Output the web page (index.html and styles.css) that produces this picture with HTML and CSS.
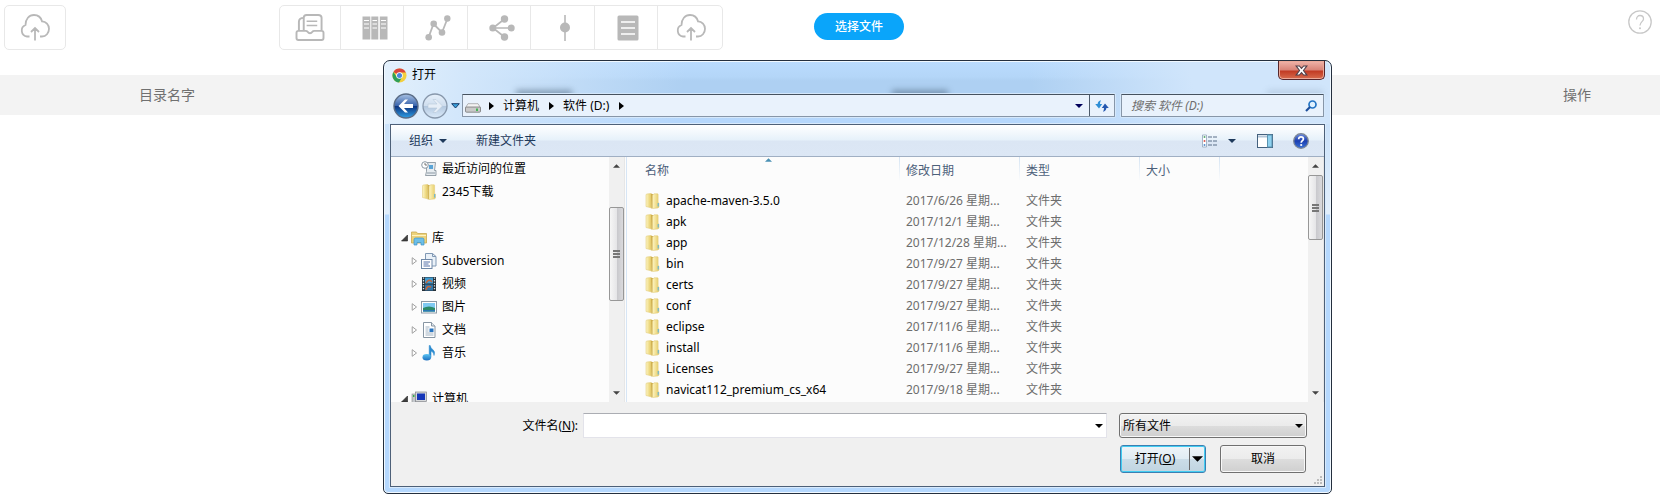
FILE: index.html
```html
<!DOCTYPE html>
<html lang="zh-CN">
<head>
<meta charset="utf-8">
<title>目录</title>
<link rel="stylesheet" href="styles.css">
</head>
<body>
<svg class="defs" aria-hidden="true">
  <defs>
    <linearGradient id="gFold" x1="0" x2="1" y1="0" y2="0"><stop offset="0" stop-color="#fdf5c4"/><stop offset="1" stop-color="#e6cb62"/></linearGradient>
    <linearGradient id="gBack" x1="0" x2="0" y1="0" y2="1"><stop offset="0" stop-color="#a9c2e4"/><stop offset=".48" stop-color="#3a65ac"/><stop offset=".52" stop-color="#0c3480"/><stop offset="1" stop-color="#2fa0e6"/></linearGradient>
    <linearGradient id="gFwd" x1="0" x2="0" y1="0" y2="1"><stop offset="0" stop-color="#e6f0fb"/><stop offset=".48" stop-color="#cfdeee"/><stop offset=".52" stop-color="#b3c8df"/><stop offset="1" stop-color="#dcebfa"/></linearGradient>
    <linearGradient id="gBlue" x1="0" x2="0" y1="0" y2="1"><stop offset="0" stop-color="#5cc3f2"/><stop offset="1" stop-color="#1a6fc0"/></linearGradient>
    <linearGradient id="gHelp" x1="0" x2="0" y1="0" y2="1"><stop offset="0" stop-color="#6e8fe0"/><stop offset=".5" stop-color="#1c3fb0"/><stop offset="1" stop-color="#3a72d8"/></linearGradient>
    <symbol id="cloud" viewBox="0 0 30 27"><path d="M9.500 22.500H7a6 6 0 0 1-1.500-11.500C5.500 5 9 1 14 1c4 0 7 2.500 8 6.300 4 .2 7 3.400 7 7.500 0 4.200-3 7.700-7 7.700h-2M15 26.500V14.500M11 18l4-4 4 4" fill="none" stroke="currentColor" stroke-width="1.800"/></symbol>
    <symbol id="folder" viewBox="0 0 14 16"><path d="M.5 2Q.5 1 1.500 1L5.500.5V14.800L.5 13.500Z" fill="url(#gFold)" stroke="#e3cd7c" stroke-width=".6"/><path d="M5.500.5 8 1.500V14.500L5.800 15.700Z" fill="#cfae4a"/><path d="M7 2.500 8.500.8H12q.6 0 .6.600v8l.9.700v4l-1 .8L7 15.500Z" fill="url(#gFold)" stroke="#e3cd7c" stroke-width=".6"/><path d="M12.700 10v3.500" stroke="#55b1ea" stroke-width="1"/></symbol>
    <symbol id="closed" viewBox="0 0 6 8"><path d="M.7.7 5 4 .7 7.300Z" fill="#fff" stroke="#a0a0a0"/></symbol>
    <symbol id="opened" viewBox="0 0 7 7"><path d="M6.500.5v6h-6Z" fill="#404040" stroke="#222" stroke-width=".6"/></symbol>
    <symbol id="down" viewBox="0 0 8 4"><path d="M0 0h8L4 4Z" fill="currentColor"/></symbol>
    <symbol id="right" viewBox="0 0 5 8"><path d="M0 0 5 4 0 8Z" fill="currentColor"/></symbol>
    <symbol id="up" viewBox="0 0 8 4"><path d="M0 4h8L4 0Z" fill="currentColor"/></symbol>
  </defs>
</svg>

<header class="topbar">
  <button class="tool upload" type="button" aria-label="上传"><svg class="i30"><use href="#cloud"/></svg></button>
  <div class="tools">
    <button class="tool first" type="button" aria-label="收件箱"><svg class="i30" viewBox="0 0 30 28"><g fill="none" stroke="currentColor" stroke-width="2" stroke-linejoin="round"><path d="M8.500 17V4q0-3 3-3h12Q27 1 27 4v13"/><path d="M8.500 4Q3.500 4 3.500 8v9" /><path d="M11.500 7.500h11M11.500 12h11" stroke-width="1.600"/><path d="M3 17.500h7.500q1.500 0 2 1 1 1.500 2.500 1.500t2.500-1.500q.5-1 2-1H27q2 0 2 2V25q0 2-2 2H3q-2 0-2-2v-5.500q0-2 2-2Z"/></g></svg></button>
    <button class="tool" type="button" aria-label="档案"><svg class="i26" viewBox="0 0 26 24"><path d="M.5.5h7.800v23H.5ZM9.300.5h7v23h-7ZM17.800.5h7.700v23h-7.700Z" fill="currentColor"/><path d="M2 4.500h5M2 8h5M2 12h5M10.500 4.500h4.500M10.500 8h4.500M10.500 12h4.500M19 4.500h5M19 8h5M19 12h5" stroke="#fff" stroke-width="1.200"/></svg></button>
    <button class="tool" type="button" aria-label="折线"><svg class="i26" viewBox="0 0 26 26"><path d="m3.500 22.500 5-13.500 8.500 8.500L22.500 3.500" fill="none" stroke="currentColor" stroke-width="1.800"/><g fill="currentColor"><circle cx="3.700" cy="22.300" r="3.300"/><circle cx="8.700" cy="8.700" r="3.300"/><circle cx="17" cy="17.500" r="3.300"/><circle cx="22.300" cy="3.500" r="3.200"/></g></svg></button>
    <button class="tool" type="button" aria-label="分享"><svg class="i26" viewBox="0 0 26 26"><path d="M15.500 4 4 13l11.500 9M4 13h18" fill="none" stroke="currentColor" stroke-width="1.700"/><g fill="currentColor"><circle cx="3.800" cy="13" r="3.500"/><circle cx="15.500" cy="4" r="3.700"/><circle cx="22.200" cy="13" r="3.500"/><circle cx="15.500" cy="22" r="3.700"/></g></svg></button>
    <button class="tool" type="button" aria-label="节点"><svg class="i26" viewBox="0 0 26 26"><path d="M13 0v26" stroke="currentColor" stroke-width="1.600"/><circle cx="13" cy="12.500" r="5" fill="currentColor"/></svg></button>
    <button class="tool" type="button" aria-label="列表"><svg class="i26" viewBox="0 0 26 26"><rect x="2.500" y=".5" width="21" height="25" rx="1.500" fill="currentColor"/><path d="M6 7h14M6 13h14M6 19h14" stroke="#fff" stroke-width="1.600"/></svg></button>
    <button class="tool last" type="button" aria-label="云上传"><svg class="i30"><use href="#cloud"/></svg></button>
  </div>
  <button class="choose" type="button">选择文件</button>
  <button class="help" type="button" aria-label="帮助"><svg viewBox="0 0 24 24"><g fill="none" stroke="currentColor" stroke-width="1.300"><circle cx="12" cy="12" r="11.200"/><path d="M8.500 9.500C8.500 7 10 5.500 12 5.500s3.500 1.400 3.500 3.500c0 2.500-3.500 3-3.500 6.500"/></g><circle cx="12" cy="18.300" r="1" fill="currentColor"/></svg></button>
</header>

<div class="strip"><span class="name">目录名字</span><span class="ops">操作</span></div>

<section class="dialog" role="dialog" aria-labelledby="dlg">
  <div class="smudges"><i></i><i></i><i></i></div>
  <button class="close" type="button" aria-label="关闭"><svg viewBox="0 0 12 10"><path d="M1 .8h3L6 3l2-2.200h3L7.800 5 11 9.200H8L6 7 4 9.200H1L4.200 5Z" fill="#fff" stroke="#51404a" stroke-width="1"/></svg></button>
  <div class="title">
    <svg class="chrome" viewBox="0 0 16 16"><circle cx="8" cy="8" r="7.500" fill="#f3cf3e"/><path d="M8 8 1.500 4.200A7.500 7.500 0 0 1 14.700 4.700H8Z" fill="#d9453c"/><path d="M1.500 4.200A7.500 7.500 0 0 0 7.500 15.500L10.500 10 8 8 4.700 9Z" fill="#2f9f57"/><circle cx="8" cy="8" r="3.500" fill="#fff"/><circle cx="8" cy="8" r="2.700" fill="#4a86dc"/></svg>
    <h1 id="dlg">打开</h1>
  </div>
  <div class="nav">
    <button class="round" type="button" aria-label="后退"><svg viewBox="0 0 26 26"><circle cx="13" cy="13" r="12" fill="url(#gBack)" stroke="#5a6c86" stroke-width="1.400"/><path d="M5.500 13 12 6.500h3L11 11h9v4h-9l4 4.500h-3Z" fill="#fff"/></svg></button>
    <button class="round" type="button" aria-label="前进"><svg viewBox="0 0 26 26"><circle cx="13" cy="13" r="12" fill="url(#gFwd)" stroke="#8797ab" stroke-width="1.300"/><path d="M20.500 13 14 6.500h-3L15 11H6v4h9l-4 4.500h3Z" fill="#e6eef7" stroke="#b9c9da" stroke-width=".6"/></svg></button>
    <button class="recent" type="button" aria-label="最近页面"><svg viewBox="0 0 9 6"><path d="M.7.7h7.600L4.500 5Z" fill="#3aa0dc" stroke="#173a68"/></svg></button>
    <div class="address">
      <svg class="drive" viewBox="0 0 16 10"><path d="M3 .7h10l2.500 4H.5Z" fill="#f3f3f3" stroke="#9a9a9a" stroke-width=".7"/><rect x=".5" y="4" width="15" height="5.200" rx="1" fill="#c9c9c9" stroke="#777" stroke-width=".8"/><path d="M12 5.500v2.500" stroke="#37b34a" stroke-width="1.800"/></svg>
      <svg class="sep"><use href="#right"/></svg>
      <a href="#pc">计算机</a>
      <svg class="sep"><use href="#right"/></svg>
      <a href="#d">软件 (D:)</a>
      <svg class="sep"><use href="#right"/></svg>
      <button class="drop" type="button" aria-label="历史"><svg class="arrow"><use href="#down"/></svg></button>
      <button class="refresh" type="button" aria-label="刷新"><svg viewBox="0 0 14 12"><path d="M6 .2Q3 .8 2.600 4H.2L4 8.500 7.200 4H5Q5 2 6 .2Z" fill="#2f8fd6"/><path d="M8 11.800q3-.6 3.400-3.800h2.400L10 3.500 6.800 8H9q0 2-1 3.800Z" fill="#2458b0"/></svg></button>
    </div>
    <div class="search">
      <input type="text" placeholder="搜索 软件 (D:)" aria-label="搜索">
      <svg viewBox="0 0 12 12"><circle cx="7.500" cy="4.500" r="3.500" fill="#dff1ff" stroke="#2374c4" stroke-width="1.700"/><path d="M5 7 1 11" stroke="#1d4f9c" stroke-width="2.200"/></svg>
    </div>
  </div>

  <div class="client">
    <div class="commands">
      <button type="button">组织 <svg class="arrow"><use href="#down"/></svg></button>
      <button class="newdir" type="button">新建文件夹</button>
      <button class="view" type="button" aria-label="视图"><svg class="i16" viewBox="0 0 16 13"><path d="M.5.500h4v12h-4Z" fill="#fff" stroke="#8fa5ba" stroke-width=".8"/><path d="M1.700 2.500h1.600" stroke="#3b9a57" stroke-width="1.600"/><path d="M1.700 6.500h1.600" stroke="#d23b34" stroke-width="1.600"/><path d="M1.700 10.500h1.600" stroke="#3478c8" stroke-width="1.600"/><path d="M6 2.500h4M11 2.500h4M6 6.500h4M11 6.500h4M6 10.500h4M11 10.500h4" stroke="#5b6f88"/></svg></button>
      <button class="viewmore" type="button" aria-label="更多视图"><svg class="arrow"><use href="#down"/></svg></button>
      <button class="preview" type="button" aria-label="预览窗格"><svg class="i16" viewBox="0 0 16 14"><rect x=".5" y=".5" width="15" height="13" fill="#fff" stroke="#44617e"/><path d="M1 2.500h9" stroke="#b3c6d8" stroke-width="2"/><rect x="10.500" y="1" width="4.500" height="12" fill="#8fd2f0" stroke="#5a93b0"/></svg></button>
      <button class="about" type="button" aria-label="帮助"><svg class="i16" viewBox="0 0 16 16"><circle cx="8" cy="8" r="7.300" fill="url(#gHelp)" stroke="#7d8794" stroke-width="1.300"/><path d="M5.700 6.200C5.700 4.600 6.700 3.800 8 3.800s2.400.8 2.400 2.100C10.400 7.500 8.200 7.600 8.200 9.700" fill="none" stroke="#fff" stroke-width="1.700"/><circle cx="8.200" cy="12" r="1.100" fill="#fff"/></svg></button>
    </div>

    <div class="panes">
      <ul class="tree">
        <li class="sub"><svg class="tw"></svg><svg class="i16" viewBox="0 0 16 16"><path d="M5.500 1.500h9l-1 8h1.500v5H4.500l1-4Z" fill="#e7ecf0" stroke="#7f8b95" stroke-width=".8"/><path d="M8 4h4v4H8Z" fill="#5aa4d6"/><path d="M6 12h8" stroke="#8b98a3"/><circle cx="4" cy="4" r="3.300" fill="#fff" stroke="#8b98a3"/><path d="M4 2v2h2" fill="none" stroke="#555" stroke-width=".8"/></svg><span>最近访问的位置</span></li>
        <li class="sub"><svg class="tw"></svg><svg class="i16"><use href="#folder"/></svg><span>2345下载</span></li>
        <li></li>
        <li><svg class="tw"><use href="#opened"/></svg><svg class="i16" viewBox="0 0 16 16"><path d="M.5 2h5l1 1.500h9V13H.5Z" fill="#ecd27a" stroke="#c8a850" stroke-width=".8"/><path d="M1 5.500h14" stroke="#fff3c0"/><path d="M3 15V9.500Q3 8 4.500 8h7q1.500 0 1.500 1.500V15h-3v-2.500H6V15Z" fill="#6dbfe8" stroke="#3c94c8" stroke-width=".7"/></svg><span>库</span></li>
        <li class="sub"><svg class="tw"><use href="#closed"/></svg><svg class="i16" viewBox="0 0 16 16"><path d="M4.500.5h7l3.500 3V13H4.500Z" fill="#eaf1f8" stroke="#8098b4"/><path d="M11.500.5v3H15" fill="none" stroke="#8098b4"/><rect x=".5" y="6.500" width="10.500" height="9" fill="#fff" stroke="#7089a8"/><path d="M2.500 9h6.500M2.500 11h5M2.500 13h6.500" stroke="#5570a8"/></svg><span>Subversion</span></li>
        <li class="sub"><svg class="tw"><use href="#closed"/></svg><svg class="i16" viewBox="0 0 16 16"><rect x="1" y="1" width="14" height="14" fill="#26313a"/><path d="M2.500 1.500v13M13.500 1.500v13" stroke="#dce6ea" stroke-width="1.300" stroke-dasharray="1.300 1.300"/><rect x="4" y="1.500" width="8" height="6" fill="#3f9bd0"/><rect x="4" y="8.500" width="8" height="6" fill="#3377a8"/><path d="M5 7q3-5 6-1M5 14q1-5 5-3" stroke="#c8653a" fill="none" stroke-width="1.500"/></svg><span>视频</span></li>
        <li class="sub"><svg class="tw"><use href="#closed"/></svg><svg class="i16" viewBox="0 0 16 14"><rect x=".5" y="1.500" width="15" height="11.500" fill="#fff" stroke="#8d9aa6"/><rect x="2" y="3" width="12" height="8.500" fill="#7fcaf2"/><path d="M2 8q6-3 12 0v3.500H2Z" fill="#2c8a68"/><path d="M2 10h12v1.500H2Z" fill="#2a78b4"/></svg><span>图片</span></li>
        <li class="sub"><svg class="tw"><use href="#closed"/></svg><svg class="i16" viewBox="0 0 16 16"><path d="M2.500.5h8l3.500 3.500v11.500h-11.500Z" fill="#fff" stroke="#8795a2"/><path d="M10.500.5V4H14" fill="#e0e6ec" stroke="#8795a2"/><path d="M4.500 5h4M4.500 7h3M4.500 9h3M4.500 11h8M4.500 13h8" stroke="#a1b2c2"/><rect x="8.500" y="6.500" width="4" height="3.500" fill="#2874c0"/></svg><span>文档</span></li>
        <li class="sub"><svg class="tw"><use href="#closed"/></svg><svg class="i16" viewBox="0 0 16 16"><path d="M8.200 12V.5h1q.5 2.500 2.500 4 3 2 1.300 6 0-3.500-3-4.200V12Z" fill="#2b8ace" stroke="#2b8ace" stroke-width=".5"/><ellipse cx="5.800" cy="12.300" rx="4.300" ry="3.200" fill="url(#gBlue)"/></svg><span>音乐</span></li>
        <li></li>
        <li><svg class="tw"><use href="#opened"/></svg><svg class="i16" viewBox="0 0 16 16"><rect x="1" y="3" width="3.500" height="10" fill="#c4c8cc" stroke="#888" stroke-width=".6"/><path d="M2.700 4v2" stroke="#35b04a" stroke-width="1.500"/><rect x="4.500" y="1" width="11" height="9.500" fill="#d6d8da" stroke="#808489" stroke-width=".7"/><rect x="6" y="2.500" width="8" height="6.500" fill="#1636b8"/><path d="M6 13h8" stroke="#999" stroke-width="2"/></svg><span>计算机</span></li>
      </ul>
      <div class="bar barleft"><button type="button" aria-label="向上"><svg class="small"><use href="#up"/></svg></button><div class="thumb"><i></i><i></i><i></i></div><button type="button" aria-label="向下"><svg class="small"><use href="#down"/></svg></button></div>
      <div class="files">
        <svg class="sort small"><use href="#up"/></svg>
        <table>
          <colgroup><col class="c1"><col class="c2"><col class="c2"><col class="c4"><col></colgroup>
          <thead><tr><th>名称</th><th>修改日期</th><th>类型</th><th>大小</th><th class="end"></th></tr></thead>
          <tbody>
            <tr><td><svg><use href="#folder"/></svg>apache-maven-3.5.0</td><td>2017/6/26 星期...</td><td>文件夹</td><td></td><td></td></tr>
            <tr><td><svg><use href="#folder"/></svg>apk</td><td>2017/12/1 星期...</td><td>文件夹</td><td></td><td></td></tr>
            <tr><td><svg><use href="#folder"/></svg>app</td><td>2017/12/28 星期...</td><td>文件夹</td><td></td><td></td></tr>
            <tr><td><svg><use href="#folder"/></svg>bin</td><td>2017/9/27 星期...</td><td>文件夹</td><td></td><td></td></tr>
            <tr><td><svg><use href="#folder"/></svg>certs</td><td>2017/9/27 星期...</td><td>文件夹</td><td></td><td></td></tr>
            <tr><td><svg><use href="#folder"/></svg>conf</td><td>2017/9/27 星期...</td><td>文件夹</td><td></td><td></td></tr>
            <tr><td><svg><use href="#folder"/></svg>eclipse</td><td>2017/11/6 星期...</td><td>文件夹</td><td></td><td></td></tr>
            <tr><td><svg><use href="#folder"/></svg>install</td><td>2017/11/6 星期...</td><td>文件夹</td><td></td><td></td></tr>
            <tr><td><svg><use href="#folder"/></svg>Licenses</td><td>2017/9/27 星期...</td><td>文件夹</td><td></td><td></td></tr>
            <tr><td><svg><use href="#folder"/></svg>navicat112_premium_cs_x64</td><td>2017/9/18 星期...</td><td>文件夹</td><td></td><td></td></tr>
          </tbody>
        </table>
      </div>
      <div class="bar barright"><button type="button" aria-label="向上"><svg class="small"><use href="#up"/></svg></button><div class="thumb"><i></i><i></i><i></i></div><button type="button" aria-label="向下"><svg class="small"><use href="#down"/></svg></button></div>
    </div>

    <form class="bottom">
      <div class="row">
        <label for="fname">文件名(<u>N</u>):</label>
        <div class="combo"><input id="fname" type="text"><svg class="arrow"><use href="#down"/></svg></div>
        <div class="combo kind"><select aria-label="文件类型"><option>所有文件</option></select><svg class="arrow"><use href="#down"/></svg></div>
      </div>
      <div class="row actions">
        <div class="split"><button type="button">打开(<u>O</u>)</button><button class="more" type="button" aria-label="更多"><svg><use href="#down"/></svg></button></div>
        <button class="cancel" type="button">取消</button>
      </div>
      <svg class="grip" viewBox="0 0 8 8"><path d="M6 0h2v2H6ZM3 3h2v2H3ZM6 3h2v2H6ZM0 6h2v2H0ZM3 6h2v2H3ZM6 6h2v2H6Z" fill="#bdbdbd"/></svg>
    </form>
  </div>
</section>
</body>
</html>
```
FILE: styles.css
```css
* { box-sizing: border-box; }
body { margin: 0; background: #fff; color: #000; font: 12px/18px "Noto Sans", "Noto Sans CJK SC", sans-serif; }
button, input, select { font: inherit; color: inherit; margin: 0; padding: 0; border: 0; background: none; }
button { display: flex; align-items: center; justify-content: center; }
svg { display: block; flex: none; }
a { color: inherit; text-decoration: none; }
.defs { position: absolute; width: 0; height: 0; }
.i30 { width: 30px; height: 27px; }
.i26 { width: 26px; height: 26px; }
.i16 { width: 16px; height: 16px; }
.arrow { width: 8px; height: 4px; }
.small { width: 7px; height: 4px; }

.topbar { display: flex; align-items: flex-start; height: 75px; padding: 5px 8px 0 4px; }
.tool { height: 43px; color: #b8b8b8; }
.tools { display: flex; width: 444px; margin-left: 213px; border: 1px solid #e8e8e8; border-radius: 5px; }
.tools .tool { flex: 1; border-left: 1px solid #e8e8e8; padding-left: 5px; }
.tools .first { flex: none; width: 60px; border-left: 0; padding-left: 0; }
.tools .last { flex: none; width: 65px; padding-left: 2px; }
.upload { width: 62px; height: 45px; border: 1px solid #e8e8e8; border-radius: 5px; }
.choose { width: 90px; height: 27px; margin: 8px 0 0 91px; border-radius: 14px; background: #0aa5fa; color: #fff; font-weight: 500; }
.help { margin: 5px 0 0 auto; color: #c8c8c8; }
.help svg { width: 24px; height: 24px; }

.strip { display: flex; justify-content: space-between; align-items: center; height: 40px; padding: 0 69px 0 139px; background: #f3f3f3; color: #707070; font-size: 14px; }

.dialog {
  position: absolute; left: 383px; right: 328px; top: 60px; padding: 0 6px 6px;
  border: 1px solid #242f3e; border-radius: 7px 7px 5px 5px; box-shadow: inset 0 0 0 1px #f0f8ff;
  background:
    linear-gradient(100deg, #e3f0fc 0, #d3e7fb 80px, transparent 300px) 0 0 / 100% 63px no-repeat,
    linear-gradient(80deg, transparent calc(100% - 300px), #d0e5fb calc(100% - 140px)) 0 0 / 100% 63px no-repeat,
    linear-gradient(#badbfe 0, #b4d6f8 16px, #aed0f2 20px, #aed0f2 34px, #b5d7fc 58px, #b5d7fc 63px) 0 0 / 100% 63px no-repeat,
    linear-gradient(#cbe2fa 63px, #e2effc 153px, #b5d8fe 154px);
}
.smudges { position: absolute; left: 132px; right: 8px; top: 29px; display: flex; justify-content: space-between; }
.smudges i { width: 56px; height: 8px; background: #40586f; opacity: .5; filter: blur(3px); }
.smudges i:last-child { opacity: .15; }
.close { position: absolute; right: 6px; top: 0; width: 47px; height: 19px; border: 1px solid #56262b; border-top: 0; border-radius: 0 0 5px 5px; box-shadow: inset 0 0 0 1px #eba999; background: linear-gradient(#f0b5ab 0, #d98377 9px, #c13a23 10px, #da7253 19px); }
.close svg { width: 13px; height: 11px; }
.title { display: flex; align-items: center; gap: 5px; height: 28px; padding-left: 2px; }
.title h1 { margin: 0; font-size: 12px; font-weight: 400; }
.chrome { width: 15px; height: 15px; }
.nav { position: relative; display: flex; align-items: center; height: 33px; margin-bottom: 2px; padding: 0 1px 0 3px; }
.round { margin-right: 3px; }
.round svg { width: 26px; height: 26px; }
.round + .recent { margin-left: -3px; }
.recent { width: 14px; }
.recent svg { width: 9px; height: 6px; }
.address, .search { display: flex; align-items: center; height: 23px; border: 1px solid #8796a8; border-top-color: #46525f; background: #e9f2fc; box-shadow: 0 0 0 1px #d5e8fb; border-radius: 1px; }
.address { flex: 1; padding-left: 2px; }
.drive { width: 16px; height: 10px; margin: 4px 3px 0 0; }
.sep { width: 5px; height: 8px; margin: 0 9px 0 5px; }
.address a + .sep { margin-left: 10px; }
.drop { width: 20px; margin-left: auto; color: #00005a; }
.refresh { width: 25px; height: 21px; border-left: 1px solid #4c5a6a; }
.refresh svg { width: 14px; height: 12px; }
.search { width: 203px; margin-left: 6px; padding: 0 6px 0 9px; }
.search input { flex: 1; min-width: 0; outline: 0; }
.search input::placeholder { color: #6e6e6e; font-style: italic; opacity: 1; }
.search svg { width: 12px; height: 12px; }

.client { position: relative; border: 1px solid #4d6078; background: #f0f0f0; box-shadow: 0 0 0 1px #d8eafc; }
.commands { display: flex; align-items: center; height: 32px; padding: 0 15px 0 18px; border-bottom: 1px solid #a0afc3; color: #1e395b; background: linear-gradient(#fff 0, #e6f1fa 15px, #dbe6f4 16px, #dce7f5 31px); }
.commands .arrow { margin-left: 6px; }
.newdir { margin-left: 29px; }
.view { margin-left: auto; }
.viewmore { margin-left: 4px; }
.preview { margin-left: 21px; }
.preview svg { height: 14px; }
.about { margin-left: 20px; }

.panes { display: flex; height: 245px; background: #fcfcfc; }
.tree { width: 218px; height: 245px; margin: 0; padding: 0; list-style: none; overflow: hidden; flex: none; }
.tree li { display: flex; align-items: center; height: 23px; padding-left: 10px; }
.tree .sub { padding-left: 20px; }
.tree span { margin-left: 5px; }
.tw { width: 7px; height: 8px; margin-right: 3px; }
.bar { display: flex; flex-direction: column; width: 16px; flex: none; background: #f0f0f0; border-right: 1px solid #e6e6e6; color: #444; }
.bar button { height: 18px; flex: none; }
.bar button:last-child { margin-top: auto; }
.thumb { display: flex; flex-direction: column; align-items: center; justify-content: center; gap: 1px; border: 1px solid #979797; border-radius: 2px; background: linear-gradient(90deg, #f6f6f6, #e6e6e8 50%, #c9c9cd 55%, #dadadd); }
.thumb i { width: 7px; height: 2px; background: #777; }
.barleft .thumb { height: 94px; margin-top: 32px; }
.barright .thumb { height: 65px; }
.files { position: relative; flex: 1; min-width: 0; margin-left: 1px; border-left: 1px solid #d6e5f5; }
.sort { position: absolute; left: 138px; top: 1px; color: #4a90b4; }
table { width: 100%; table-layout: fixed; border-collapse: collapse; }
.c1 { width: 273px; }
.c2 { width: 120px; }
.c4 { width: 80px; }
th { height: 33px; padding: 0 0 0 6px; vertical-align: top; text-align: left; font-weight: 400; line-height: 28px; color: #4c607a; background: linear-gradient(#d5e4f3, #fcfcfc) right top / 1px 24px no-repeat; }
th:first-child { padding-left: 18px; }
.end { background: none; }
td { height: 21px; padding: 0 0 0 6px; color: #6d6d6d; white-space: nowrap; }
td:first-child { display: flex; align-items: center; gap: 6px; padding-left: 18px; color: #000; }
td svg { width: 15px; height: 16px; }

.bottom { padding: 11px 17px 13px 0; }
.row { display: flex; align-items: center; }
.row label { width: 187px; text-align: right; margin-right: 5px; }
.combo { position: relative; flex: 1; }
.combo input, .combo select { display: block; width: 100%; height: 25px; padding: 0 20px 0 3px; border: 1px solid #e3e3ea; border-top-color: #abadb3; background: #fff; }
.combo .arrow { position: absolute; right: 4px; top: 11px; pointer-events: none; }
.kind { flex: none; width: 188px; margin-left: 12px; }
.combo select { appearance: none; border: 1px solid #707070; border-radius: 3px; background: linear-gradient(#f2f2f2 0, #ebebeb 50%, #dddddd 50%, #cfcfcf); box-shadow: inset 0 0 0 1px #f8f8f8; }
.actions { justify-content: flex-end; gap: 14px; margin-top: 7px; padding-right: 1px; }
.split, .cancel { width: 86px; height: 28px; border: 1px solid #707070; border-radius: 3px; background: linear-gradient(#f2f2f2 0, #ebebeb 50%, #dddddd 50%, #cfcfcf); box-shadow: inset 0 0 0 1px #f8f8f8; }
.split { display: flex; border-color: #3c7fb1; box-shadow: inset 0 0 0 1px #42cdf2; background: linear-gradient(#eef4f8 0, #e0ecf3 50%, #cbdde8 50%, #c0d4e0); }
.split button:first-child { flex: 1; }
.more { width: 16px; margin: 2px 0; border-left: 1px solid #6a6a6a; }
.more svg { width: 11px; height: 6px; }
.grip { position: absolute; right: 2px; bottom: 2px; width: 8px; height: 8px; }
```
